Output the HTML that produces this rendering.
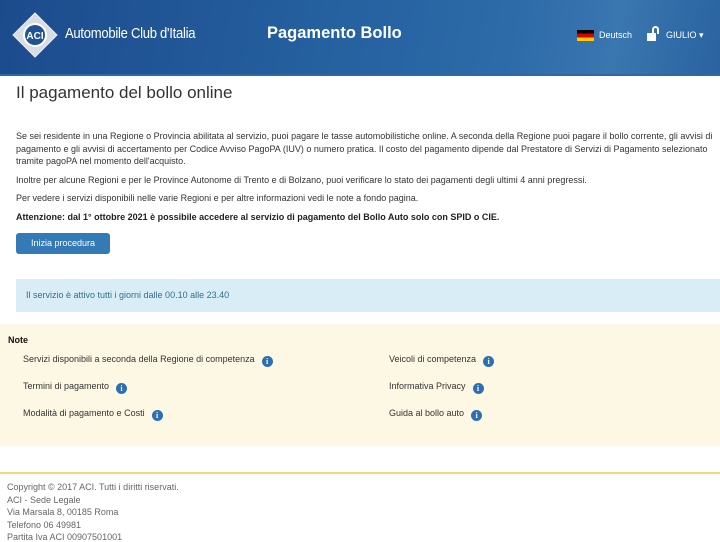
<!DOCTYPE html>
<html><head><meta charset="utf-8"><style>
*{margin:0;padding:0;box-sizing:border-box}
body{width:720px;height:540px;overflow:hidden;font-family:"Liberation Sans",Arial,sans-serif;background:#fff;color:#333;position:relative}
.hdr{position:absolute;left:0;top:0;width:720px;height:76px;background:linear-gradient(100deg,#1c4b8c 0%,#25609f 45%,#2c6aa8 70%,#3a76b0 85%,#2a63a0 100%);border-bottom:2px solid #2b6aa8}
.abs{position:absolute}
p{font-size:9px;line-height:12.5px}
.ni{position:absolute;font-size:9px;color:#333}
.i{display:inline-block;width:11px;height:11px;border-radius:50%;background:#2d6fb3;color:#fff;font:bold 8px/11px "Liberation Serif",serif;text-align:center;vertical-align:-2px;margin-left:7px}
.ft{position:absolute;left:7px;font-size:9px;color:#666}
</style></head><body>
<div class="hdr">
 <svg class="abs" style="left:12px;top:12px" width="46" height="46" viewBox="0 0 46 46"><polygon points="23,1 45,23 23,45 1,23" fill="#d8dde3" stroke="#eef" stroke-width="1"/><circle cx="23" cy="23" r="12" fill="#fff"/><circle cx="23" cy="23" r="10" fill="#1f5394"/><text x="23" y="27" font-family="Liberation Sans" font-weight="bold" font-size="10" fill="#fff" text-anchor="middle">ACI</text></svg>
 <div class="abs" style="left:65px;top:26px;color:#fff;font-size:14.5px;letter-spacing:-.3px;transform:scaleX(.9);transform-origin:left">Automobile Club d'Italia</div>
 <div class="abs" style="left:267px;top:24px;color:#fff;font-size:16.5px;font-weight:bold">Pagamento Bollo</div>
 <div class="abs" style="left:577px;top:30px;width:17px;height:11px;background:linear-gradient(#000 33%,#d00 33%,#d00 66%,#fc0 66%)"></div>
 <div class="abs" style="left:599px;top:30px;color:#fff;font-size:9px">Deutsch</div>
 <div class="abs" style="left:647px;top:33px;width:9px;height:8px;background:#fff"></div>
 <div class="abs" style="left:652px;top:26px;width:7px;height:8px;border:2px solid #fff;border-bottom:none;border-radius:4px 4px 0 0"></div>
 <div class="abs" style="left:666px;top:30px;color:#fff;font-size:9px">GIULIO ▾</div>
</div>
<div class="abs" style="left:16px;top:83px;font-size:17px;color:#333">Il pagamento del bollo online</div>
<div class="abs" style="left:16px;top:130px;width:700px">
<p>Se sei residente in una Regione o Provincia abilitata al servizio, puoi pagare le tasse automobilistiche online. A seconda della Regione puoi pagare il bollo corrente, gli avvisi di pagamento e gli avvisi di accertamento per Codice Avviso PagoPA (IUV) o numero pratica. Il costo del pagamento dipende dal Prestatore di Servizi di Pagamento selezionato tramite pagoPA nel momento dell'acquisto.</p>
<p style="margin-top:6px">Inoltre per alcune Regioni e per le Province Autonome di Trento e di Bolzano, puoi verificare lo stato dei pagamenti degli ultimi 4 anni pregressi.</p>
<p style="margin-top:6px">Per vedere i servizi disponibili nelle varie Regioni e per altre informazioni vedi le note a fondo pagina.</p>
<p style="margin-top:6px;font-weight:bold;color:#222">Attenzione: dal 1° ottobre 2021 è possibile accedere al servizio di pagamento del Bollo Auto solo con SPID o CIE.</p>
</div>
<div class="abs" style="left:16px;top:233px;width:94px;height:21px;background:#337ab7;border-radius:3px;color:#fff;font-size:9px;line-height:21px;text-align:center">Inizia procedura</div>
<div class="abs" style="left:16px;top:279px;width:704px;height:33px;background:#d9edf7;color:#31708f;font-size:9px;line-height:33px;padding-left:10px">Il servizio è attivo tutti i giorni dalle 00.10 alle 23.40</div>
<div class="abs" style="left:0;top:324px;width:720px;height:122px;background:#fcf8e3"></div>
<div class="abs" style="left:8px;top:335px;font-size:9px;font-weight:bold;color:#111">Note</div>
<div class="ni" style="left:23px;top:354px">Servizi disponibili a seconda della Regione di competenza<span class="i">i</span></div>
<div class="ni" style="left:23px;top:381px">Termini di pagamento<span class="i">i</span></div>
<div class="ni" style="left:23px;top:408px">Modalità di pagamento e Costi<span class="i">i</span></div>
<div class="ni" style="left:389px;top:354px">Veicoli di competenza<span class="i">i</span></div>
<div class="ni" style="left:389px;top:381px">Informativa Privacy<span class="i">i</span></div>
<div class="ni" style="left:389px;top:408px">Guida al bollo auto<span class="i">i</span></div>
<div class="abs" style="left:0;top:472px;width:720px;height:2px;background:#f5d77a"></div>
<div class="ft" style="top:482px">Copyright © 2017 ACI. Tutti i diritti riservati.</div>
<div class="ft" style="top:495px">ACI - Sede Legale</div>
<div class="ft" style="top:507px">Via Marsala 8, 00185 Roma</div>
<div class="ft" style="top:520px">Telefono 06 49981</div>
<div class="ft" style="top:532px">Partita Iva ACI 00907501001</div>
</body></html>
